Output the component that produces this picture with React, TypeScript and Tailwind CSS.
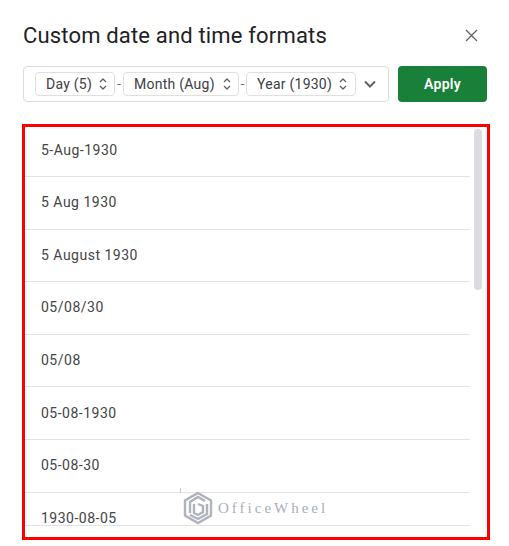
import React from "react";

const rows = ["5-Aug-1930", "5 Aug 1930", "5 August 1930", "05/08/30", "05/08", "05-08-1930", "05-08-30", "1930-08-05"];

function Updown({ ml }: { ml: string }) {
  return (
    <svg width="10" height="14" viewBox="0 0 10 14" fill="none" stroke="#5f6368" strokeWidth="1.3" className={`shrink-0 ${ml}`}>
      <path d="M2 5l3-3 3 3" />
      <path d="M2 9l3 3 3-3" />
    </svg>
  );
}

function Chip({ label, w, ml }: { label: string; w: string; ml: string }) {
  return (
    <div className={`flex h-[24px] items-center rounded-[4px] border border-[#e0e0e0] pl-[10px] text-[14px] tracking-[0.25px] text-[#3c4043] ${w}`}>
      <span>{label}</span>
      <Updown ml={ml} />
    </div>
  );
}

export default function App() {
  return (
    <div className="flex h-[546px] w-[509px] flex-col overflow-hidden bg-white font-['Roboto',sans-serif]">
      <div className="mt-[21px] flex h-[28px] items-center pl-[23px]">
        <h1 className="mt-[1px] text-[22px] font-normal leading-[28px] tracking-[0.17px] text-[#202124]">Custom date and time formats</h1>
        <svg width="13" height="13" viewBox="0 0 13 13" stroke="#5f6368" strokeWidth="1.3" className="ml-[138px] mt-[1px] shrink-0">
          <path d="M1 1l11 11M12 1L1 12" />
        </svg>
      </div>
      <div className="mt-[17px] flex items-stretch pl-[23px] pr-[22px]">
        <div className="flex h-[36px] w-[366px] items-center rounded-[4px] border border-[#dadce0] pl-[11px]">
          <Chip label="Day (5)" w="w-[80px]" ml="ml-[6px]" />
          <span className="w-[8px] text-center text-[13px] text-[#5f6368]">-</span>
          <Chip label="Month (Aug)" w="w-[116px]" ml="ml-[7px]" />
          <span className="w-[7px] text-center text-[13px] text-[#5f6368]">-</span>
          <Chip label="Year (1930)" w="w-[110px]" ml="ml-[6px]" />
          <svg width="12" height="8" viewBox="0 0 12 8" fill="none" stroke="#5f6368" strokeWidth="2" className="ml-[8px]">
            <path d="M1 1.5l5 5 5-5" />
          </svg>
        </div>
        <button className="ml-[9px] h-[36px] w-[89px] rounded-[4px] bg-[#188038] text-[14px] font-semibold tracking-[0.3px] text-white">Apply</button>
      </div>
      <div className="relative ml-[22px] mt-[22px] h-[416px] w-[468px] overflow-hidden border-[3px] border-[#ff0000]">
        <div className="-mt-[2.6px]">
          {rows.map((r) => (
            <div key={r} className="flex h-[52.6px] w-[445px] items-center border-b border-[#e3e3e3] pl-[16px] text-[14px] tracking-[0.5px] text-[#444]">
              {r}
            </div>
          ))}
        </div>
        <div className="absolute left-0 top-[398px] h-[12px] w-[445px] border-t border-[#e3e3e3] bg-white" />
        <div className="absolute right-[5px] top-[2px] h-[161px] w-[8px] rounded-full bg-[#dadce0]" />
        <div className="absolute left-[158px] top-[364px] flex items-center gap-[5px]">
          <svg width="30" height="34" viewBox="0 0 30 34" fill="none" stroke="#b0b3be" strokeWidth="2.4">
            <path d="M15 2l13 7.500v15l-13 7.500-13-7.500v-15z" />
            <path d="M22 10l-7-4-8 5v11M24 13v10l-9 5-8-4M11 13v9l4 2 5-3v-6l-5-2" />
          </svg>
          <span className="font-['Liberation_Serif',serif] text-[15px] tracking-[3px] text-[#a9adb8]">OfficeWheel</span>
        </div>
        <div className="absolute left-[155px] top-[361px] h-[5px] w-[1px] bg-[#c8c8c8]" />
      </div>
    </div>
  );
}
